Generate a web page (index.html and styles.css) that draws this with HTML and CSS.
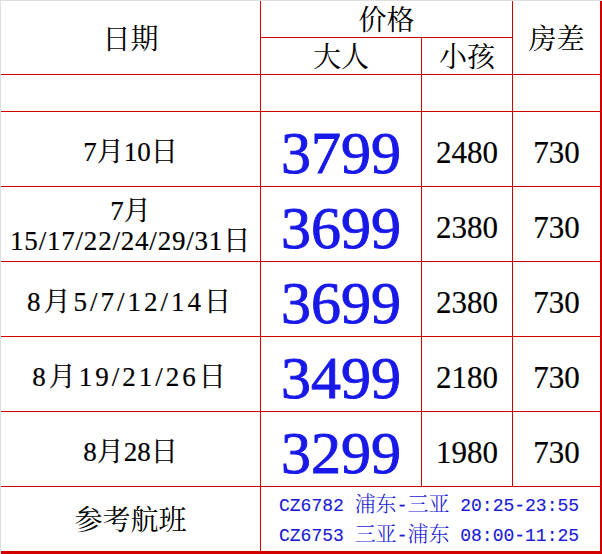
FILE: index.html
```html
<!DOCTYPE html>
<html lang="zh">
<head>
<meta charset="utf-8">
<title>价格表</title>
<link rel="stylesheet" href="styles.css">
</head>
<body>
<div class="sheet">
  <div class="cell hd span-r2">日期</div>
  <div class="cell hd span-c2">价格</div>
  <div class="cell hd span-r2 last-col">房差</div>
  <div class="cell hd">大人</div>
  <div class="cell hd">小孩</div>

  <div class="cell"></div>
  <div class="cell"></div>
  <div class="cell"></div>
  <div class="cell last-col"></div>

  <div class="cell date">7月10日</div>
  <div class="cell big">3799</div>
  <div class="cell num">2480</div>
  <div class="cell num last-col">730</div>

  <div class="cell date two"><span>7月</span><span class="tight">15/17/22/24/29/31日</span></div>
  <div class="cell big">3699</div>
  <div class="cell num">2380</div>
  <div class="cell num last-col">730</div>

  <div class="cell date wide">8月5/7/12/14日</div>
  <div class="cell big">3699</div>
  <div class="cell num">2380</div>
  <div class="cell num last-col">730</div>

  <div class="cell date wide">8月19/21/26日</div>
  <div class="cell big">3499</div>
  <div class="cell num">2180</div>
  <div class="cell num last-col">730</div>

  <div class="cell date">8月28日</div>
  <div class="cell big">3299</div>
  <div class="cell num">1980</div>
  <div class="cell num last-col">730</div>

  <div class="cell hd foot">参考航班</div>
  <div class="cell flights foot last-col">
    <div class="fl">CZ6782 <span class="cn">浦东</span>-<span class="cn">三亚</span> 20:25-23:55</div>
    <div class="fl">CZ6753 <span class="cn">三亚</span>-<span class="cn">浦东</span> 08:00-11:25</div>
  </div>
</div>
</body>
</html>
```

FILE: styles.css
```css
html, body {
  margin: 0;
  padding: 0;
  background: #ffffff;
}

.sheet {
  width: 602px;
  height: 554px;
  box-sizing: border-box;
  border-top: 1px solid #dedede;
  border-left: 1px solid #dedede;
  display: grid;
  grid-template-columns: 260px 161px 91px 89px;
  grid-template-rows: 37px 37px 37px repeat(5, 75px) 67px;
  font-family: "Liberation Serif", "Noto Serif CJK SC", "Noto Sans CJK SC", serif;
  color: #000000;
}

.cell {
  box-sizing: border-box;
  border-right: 1px solid #d40000;
  border-bottom: 1px solid #d40000;
  display: flex;
  align-items: center;
  justify-content: center;
  text-align: center;
  white-space: nowrap;
}

.last-col {
  border-right: 2px solid #d40000;
}

.foot {
  border-bottom: 3px solid #d40000;
}

.hd {
  font-size: 28px;
  padding-top: 4px;
  line-height: 1;
}

.span-r2 {
  grid-row: span 2;
}

.span-c2 {
  grid-column: span 2;
}

.date {
  font-size: 27px;
  padding-top: 6px;
  line-height: 1;
  -webkit-text-stroke: 0.2px #000000;
}

.date.two {
  flex-direction: column;
  line-height: 30px;
  padding-top: 4px;
}

.tight {
  letter-spacing: 0.8px;
}

.wide {
  letter-spacing: 3px;
}

.big {
  font-size: 60px;
  color: #1818e8;
  padding-top: 8px;
  line-height: 1;
  -webkit-text-stroke: 0.9px #1818e8;
}

.num {
  font-size: 31px;
  padding-top: 6px;
  line-height: 1;
  -webkit-text-stroke: 0.2px #000000;
}

.flights {
  grid-column: span 3;
  flex-direction: column;
  align-items: flex-start;
  padding-left: 18px;
  padding-top: 0;
  font-family: "Liberation Mono", "Noto Sans CJK SC", monospace;
  font-size: 18px;
  color: #1a1ad6;
  line-height: 26px;
  -webkit-text-stroke: 0.15px #1a1ad6;
}

.cn {
  font-family: "Noto Serif CJK SC", "Noto Sans CJK SC", sans-serif;
  font-size: 21px;
  font-weight: 300;
  -webkit-text-stroke: 0;
}
```
